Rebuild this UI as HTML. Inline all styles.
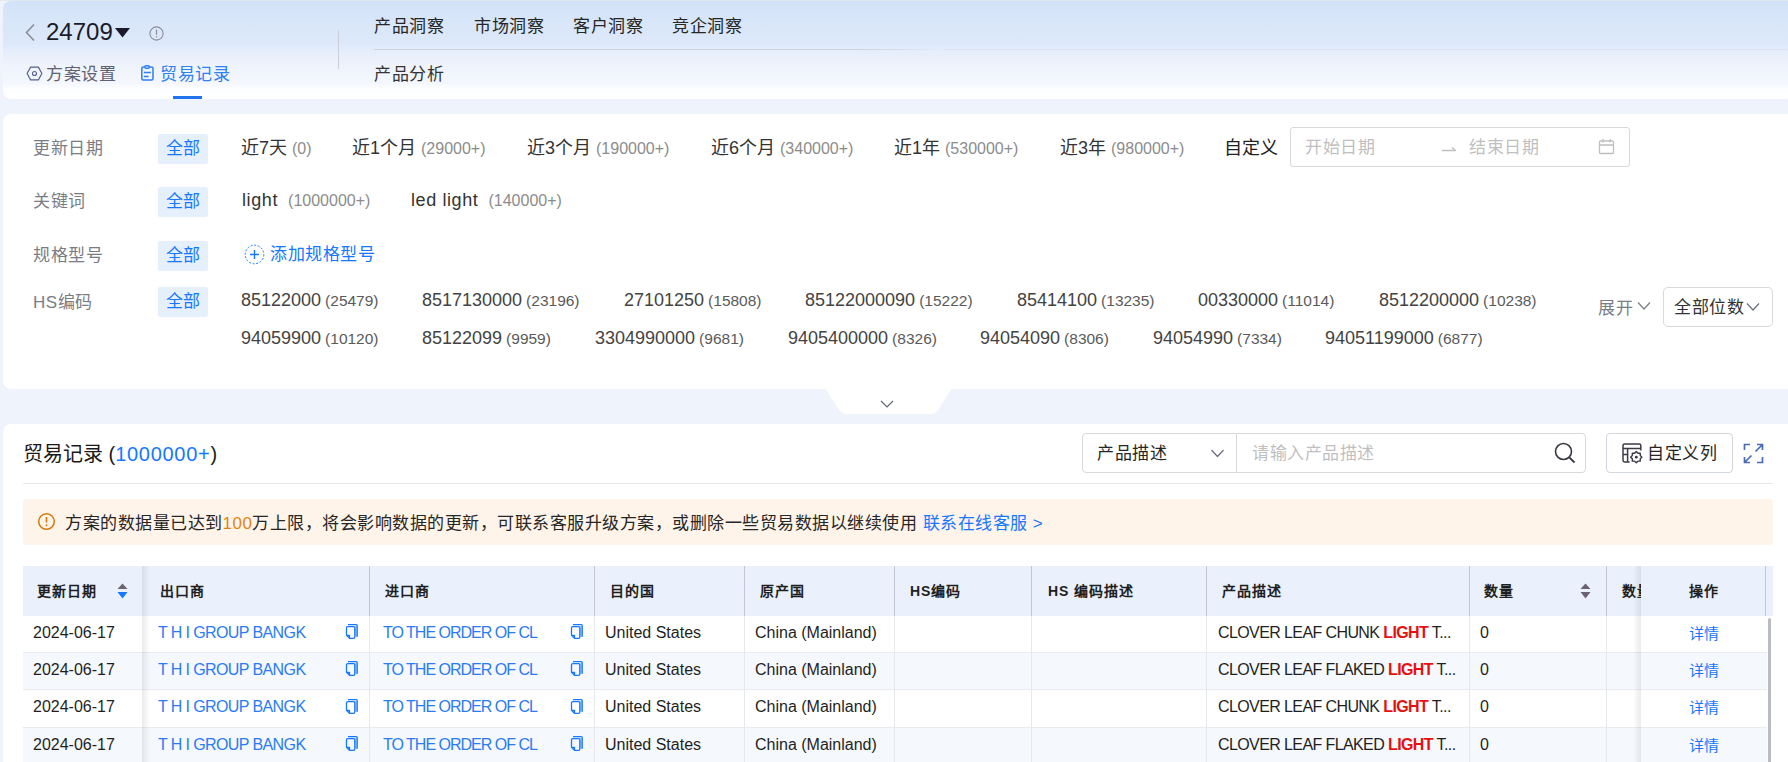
<!DOCTYPE html>
<html lang="zh-CN"><head><meta charset="utf-8">
<style>
*{box-sizing:border-box;margin:0;padding:0}
html,body{width:1788px;height:762px;overflow:hidden}
body{background:#eff3fc;font-family:"Liberation Sans",sans-serif;color:#333;position:relative}
.a{position:absolute;white-space:nowrap}
#hdr{position:absolute;left:3px;top:1px;width:1785px;height:98px;border-top-left-radius:8px;border-bottom-left-radius:8px;
 background:linear-gradient(180deg,#d2e2f8 0%,#d8e6f9 20%,#dde9fa 44%,#e6eefb 52%,#eef3fc 66%,#f4f7fd 84%,#fcfdff 89%,#ffffff 100%)}
.panel{position:absolute;left:3px;right:0;background:#fff;border-top-left-radius:8px;border-bottom-left-radius:8px}
.t18{font-size:17px;line-height:20px;letter-spacing:0.5px}
.lbl{color:#7a7d86}
.tag{position:absolute;left:158px;width:50px;height:30px;background:#e6f0fd;border-radius:2px;color:#1677ff;font-size:17px;letter-spacing:0.5px;text-indent:0.5px;line-height:28px;padding-top:1px;text-align:center}
.it{font-size:18px;line-height:20px;color:#333}
.cnt{font-size:16px;color:#8c8c8c}
.hs{font-size:18px;line-height:20px;color:#434343}
.hs span{font-size:15.5px;color:#5a5a5a;margin-left:4px}
.th{font-size:14px;line-height:20px;font-weight:bold;color:#1f1f1f;letter-spacing:1px}
.td{font-size:16px;line-height:20px;color:#1f1f1f}
.lk{color:#2a7bf5}
.pd b{color:#e8100f}
</style></head><body>
<!-- header -->
<div class="a" style="left:0;top:0;width:1788px;height:1px;background:#e4e7ee"></div><div id="hdr"></div>
<svg class="a" style="left:24px;top:23px" width="12" height="19" viewBox="0 0 12 19"><path d="M10 1.5 L2.5 9.5 L10 17.5" fill="none" stroke="#8b8e98" stroke-width="1.6"/></svg>
<div class="a" style="left:46px;top:18px;font-size:24px;line-height:28px;color:#1a1a2a">24709</div>
<svg class="a" style="left:115px;top:28px" width="16" height="10"><path d="M0 0 H15 L7.5 9.5Z" fill="#1a1a2a"/></svg>
<svg class="a" style="left:149px;top:26px" width="15" height="15" viewBox="0 0 15 15"><circle cx="7.5" cy="7.5" r="6.6" fill="none" stroke="#8b8e98" stroke-width="1.1"/><path d="M7.5 3.5V8.8" stroke="#8b8e98" stroke-width="1.2"/><circle cx="7.5" cy="10.8" r="0.75" fill="#8b8e98"/></svg>
<svg class="a" style="left:26px;top:66px" width="17" height="15" viewBox="0 0 17 15"><path d="M4.6 1.1 H12.4 L15.9 7.5 L12.4 13.9 H4.6 L1.1 7.5Z" fill="none" stroke="#56608a" stroke-width="1.15" stroke-linejoin="round"/><circle cx="8.5" cy="7.5" r="2" fill="none" stroke="#56608a" stroke-width="1.15"/></svg>
<div class="a t18" style="left:46px;top:65px;color:#5f6272">方案设置</div>
<svg class="a" style="left:140px;top:64px" width="15" height="18" viewBox="0 0 15 18"><path d="M4.6 2.9H3.3Q1.8 2.9 1.8 4.4V14.5Q1.8 16 3.3 16H11.5Q13 16 13 14.5V4.4Q13 2.9 11.5 2.9H9.4" fill="none" stroke="#2f80f0" stroke-width="1.5"/><rect x="4.7" y="1.6" width="4.7" height="2.8" rx="1.3" fill="#a9cbf9" stroke="#2f80f0" stroke-width="1.4"/><path d="M3.9 8.5H10.9M3.9 12.4H8.6" stroke="#2f80f0" stroke-width="1.5"/></svg>
<div class="a t18" style="left:160px;top:65px;color:#2f80f0">贸易记录</div>
<div class="a" style="left:173px;top:96px;width:29px;height:3px;background:#1f74ee"></div>
<div class="a" style="left:338px;top:30px;width:1px;height:39px;background:#c9ced8"></div>
<div class="a t18" style="left:374px;top:17px;color:#262626">产品洞察</div>
<div class="a t18" style="left:474px;top:17px;color:#262626">市场洞察</div>
<div class="a t18" style="left:573px;top:17px;color:#262626">客户洞察</div>
<div class="a t18" style="left:672px;top:17px;color:#262626">竞企洞察</div>
<div class="a" style="left:374px;top:49px;width:570px;height:1px;background:linear-gradient(90deg,#cdd3dd 0%,#cdd3dd 85%,rgba(205,211,221,0) 100%)"></div>
<div class="a" style="left:944px;top:49px;width:844px;height:1px;background:rgba(205,212,224,0.35)"></div>
<div class="a t18" style="left:374px;top:65px;color:#333">产品分析</div>

<!-- filter panel -->
<div class="panel" style="top:114px;height:275px"></div>
<svg class="a" style="left:825px;top:388px" width="127" height="27" viewBox="0 0 127 27"><path d="M0 0 H127 L113 22 Q110 26 105 26 H22 Q17 26 14 22 Z" fill="#fff"/><path d="M56 13 L62 19 L68 13" fill="none" stroke="#5e6170" stroke-width="1.1"/></svg>

<div class="a t18 lbl" style="left:33px;top:139px">更新日期</div>
<div class="tag" style="top:134px">全部</div>
<div class="a it" style="left:241px;top:138px">近7天 <span class="cnt">(0)</span></div>
<div class="a it" style="left:352px;top:138px">近1个月 <span class="cnt">(29000+)</span></div>
<div class="a it" style="left:527px;top:138px">近3个月 <span class="cnt">(190000+)</span></div>
<div class="a it" style="left:711px;top:138px">近6个月 <span class="cnt">(340000+)</span></div>
<div class="a it" style="left:894px;top:138px">近1年 <span class="cnt">(530000+)</span></div>
<div class="a it" style="left:1060px;top:138px">近3年 <span class="cnt">(980000+)</span></div>
<div class="a it" style="left:1224px;top:138px;color:#222">自定义</div>
<div class="a" style="left:1290px;top:127px;width:340px;height:40px;border:1px solid #d9d9d9;border-radius:3px;background:#fff"></div>
<div class="a t18" style="left:1305px;top:138px;color:#bfbfbf">开始日期</div>
<svg class="a" style="left:1441px;top:142.5px" width="16" height="10"><path d="M1 7.5H15M11 4.5 L14.5 7.5" fill="none" stroke="#bfbfbf" stroke-width="1.3"/></svg>
<div class="a t18" style="left:1469px;top:138px;color:#bfbfbf">结束日期</div>
<svg class="a" style="left:1598px;top:138px" width="17" height="17" viewBox="0 0 17 17"><rect x="1.5" y="3" width="14" height="12.5" rx="1" fill="none" stroke="#bfbfbf" stroke-width="1.3"/><path d="M1.5 7H15.5M5 1V4.5M12 1V4.5" stroke="#bfbfbf" stroke-width="1.3"/></svg>

<div class="a t18 lbl" style="left:33px;top:192px">关键词</div>
<div class="tag" style="top:187px">全部</div>
<div class="a it" style="left:242px;top:190px;letter-spacing:0.6px">light <span class="cnt" style="letter-spacing:0">&nbsp;(1000000+)</span></div>
<div class="a it" style="left:411px;top:190px;letter-spacing:0.6px">led light <span class="cnt" style="letter-spacing:0">&nbsp;(140000+)</span></div>

<div class="a t18 lbl" style="left:33px;top:246px">规格型号</div>
<div class="tag" style="top:241px">全部</div>
<svg class="a" style="left:244px;top:244px" width="21" height="21" viewBox="0 0 21 21"><circle cx="10.5" cy="10.5" r="9.3" fill="none" stroke="#1677ff" stroke-width="1" stroke-dasharray="2 1.6"/><path d="M10.5 6V15M6 10.5H15" stroke="#1677ff" stroke-width="1.4"/></svg>
<div class="a t18" style="left:270px;top:245px;color:#1677ff">添加规格型号</div>

<div class="a t18 lbl" style="left:33px;top:293px">HS编码</div>
<div class="tag" style="top:287px">全部</div>
<div class="a hs" style="left:241px;top:290px">85122000<span>(25479)</span></div>
<div class="a hs" style="left:422px;top:290px">8517130000<span>(23196)</span></div>
<div class="a hs" style="left:624px;top:290px">27101250<span>(15808)</span></div>
<div class="a hs" style="left:805px;top:290px">85122000090<span>(15222)</span></div>
<div class="a hs" style="left:1017px;top:290px">85414100<span>(13235)</span></div>
<div class="a hs" style="left:1198px;top:290px">00330000<span>(11014)</span></div>
<div class="a hs" style="left:1379px;top:290px">8512200000<span>(10238)</span></div>
<div class="a hs" style="left:241px;top:328px">94059900<span>(10120)</span></div>
<div class="a hs" style="left:422px;top:328px">85122099<span>(9959)</span></div>
<div class="a hs" style="left:595px;top:328px">3304990000<span>(9681)</span></div>
<div class="a hs" style="left:788px;top:328px">9405400000<span>(8326)</span></div>
<div class="a hs" style="left:980px;top:328px">94054090<span>(8306)</span></div>
<div class="a hs" style="left:1153px;top:328px">94054990<span>(7334)</span></div>
<div class="a hs" style="left:1325px;top:328px">94051199000<span>(6877)</span></div>
<div class="a t18 lbl" style="left:1598px;top:299px">展开</div>
<svg class="a" style="left:1637px;top:301px" width="14" height="10"><path d="M1 1.5 L7 8 L13 1.5" fill="none" stroke="#7a7d86" stroke-width="1.2"/></svg>
<div class="a" style="left:1663px;top:287px;width:110px;height:40px;border:1px solid #d9d9d9;border-radius:5px"></div>
<div class="a t18" style="left:1674px;top:298px;color:#333">全部位数</div>
<svg class="a" style="left:1746px;top:302px" width="14" height="10"><path d="M1 1.5 L7 8 L13 1.5" fill="none" stroke="#6b6e7c" stroke-width="1.2"/></svg>

<!-- records panel -->
<div class="panel" style="top:424px;height:400px"></div>
<div class="a" style="left:23px;top:442px;font-size:20px;line-height:24px;color:#1a1a1a;font-weight:500">贸易记录 (<span style="color:#1677ff;letter-spacing:0.7px;font-weight:normal">1000000+</span>)</div>
<div class="a" style="left:1082px;top:433px;width:504px;height:40px;border:1px solid #d9d9d9;border-radius:4px;background:#fff"></div>
<div class="a" style="left:1236px;top:434px;width:1px;height:38px;background:#d9d9d9"></div>
<div class="a t18" style="left:1097px;top:444px;color:#262626">产品描述</div>
<svg class="a" style="left:1210px;top:448px" width="15" height="11"><path d="M1.5 2 L7.5 8.5 L13.5 2" fill="none" stroke="#6b6e7c" stroke-width="1.2"/></svg>
<div class="a t18" style="left:1252px;top:444px;color:#bfbfbf">请输入产品描述</div>
<svg class="a" style="left:1554px;top:442px" width="22" height="22" viewBox="0 0 22 22"><circle cx="9.5" cy="9.5" r="8" fill="none" stroke="#3a3440" stroke-width="1.6"/><path d="M15.3 15.3 L20.5 20.5" stroke="#3a3440" stroke-width="1.8"/></svg>
<div class="a" style="left:1606px;top:433px;width:127px;height:40px;border:1px solid #d2d6de;border-radius:4px;background:#fff"></div>
<svg class="a" style="left:1622px;top:443px" width="21" height="21" viewBox="0 0 21 21"><path d="M7.6 18.9H2.6Q1 18.9 1 17.3V2.5Q1 0.9 2.6 0.9H17.2Q18.8 0.9 18.8 2.5V7.4" fill="none" stroke="#3d3a48" stroke-width="1.5"/><path d="M1 5.6H18.8M5.6 5.6V18.9M1 11.5H5.6" fill="none" stroke="#3d3a48" stroke-width="1.5"/><polygon points="14.30,8.60 15.95,10.23 18.26,10.24 18.27,12.55 19.90,14.20 18.27,15.85 18.26,18.16 15.95,18.17 14.30,19.80 12.65,18.17 10.34,18.16 10.33,15.85 8.70,14.20 10.33,12.55 10.34,10.24 12.65,10.23" fill="#fff" stroke="#3d3a48" stroke-width="1.4" stroke-linejoin="round"/><circle cx="14.3" cy="14.2" r="1.4" fill="#3d3a48"/></svg>
<div class="a t18" style="left:1647px;top:444px;color:#262626">自定义列</div>
<svg class="a" style="left:1743px;top:443px" width="21" height="21" viewBox="0 0 21 21"><path d="M1.5 7V1.5H7M14 1.5H19.5V7M19.5 14V19.5H14M7 19.5H1.5V14M19 2 L12.5 8.5M2 19 L8.5 12.5" fill="none" stroke="#4a6cb5" stroke-width="1.7"/></svg>
<div class="a" style="left:23px;top:483px;width:1750px;height:1px;background:#e8e8e8"></div>
<div class="a" style="left:23px;top:499px;width:1750px;height:46px;background:#fff4ea;border-radius:4px"></div>
<svg class="a" style="left:37px;top:512px" width="19" height="19" viewBox="0 0 19 19"><circle cx="9.5" cy="9.5" r="7.8" fill="none" stroke="#d4780a" stroke-width="1.5"/><path d="M9.5 5V10.5" stroke="#d4780a" stroke-width="1.6"/><circle cx="9.5" cy="13.2" r="0.95" fill="#d4780a"/></svg>
<div class="a" style="left:65px;top:514px;font-size:17px;letter-spacing:0.5px;line-height:20px;color:#262626">方案的数据量已达到<span style="color:#e0860f">100</span>万上限，将会影响数据的更新，可联系客服升级方案，或删除一些贸易数据以继续使用 <span style="color:#1677ff">联系在线客服 &gt;</span></div>

<div class="a" style="left:23px;top:566px;width:1750px;height:50px;background:#eaf1fc"></div>
<div class="a" style="left:23px;top:616px;width:1744px;height:36.5px;background:#ffffff;border-bottom:1px solid #e9ebef"></div>
<div class="a" style="left:23px;top:652.5px;width:1744px;height:37.5px;background:#f5f8fd;border-bottom:1px solid #e9ebef"></div>
<div class="a" style="left:23px;top:690px;width:1744px;height:37.5px;background:#ffffff;border-bottom:1px solid #e9ebef"></div>
<div class="a" style="left:23px;top:727.5px;width:1744px;height:37.5px;background:#f5f8fd;border-bottom:1px solid #e9ebef"></div>
<div class="a" style="left:369.0px;top:566px;width:1px;height:50px;background:#c3c7cf"></div>
<div class="a" style="left:594.2px;top:566px;width:1px;height:50px;background:#c3c7cf"></div>
<div class="a" style="left:744.1px;top:566px;width:1px;height:50px;background:#c3c7cf"></div>
<div class="a" style="left:893.9px;top:566px;width:1px;height:50px;background:#c3c7cf"></div>
<div class="a" style="left:1031.2px;top:566px;width:1px;height:50px;background:#c3c7cf"></div>
<div class="a" style="left:1205.8px;top:566px;width:1px;height:50px;background:#c3c7cf"></div>
<div class="a" style="left:1468.5px;top:566px;width:1px;height:50px;background:#c3c7cf"></div>
<div class="a" style="left:1606.0px;top:566px;width:1px;height:50px;background:#c3c7cf"></div>
<div class="a" style="left:1764.5px;top:566px;width:1px;height:50px;background:#c3c7cf"></div>
<div class="a" style="left:369.0px;top:616px;width:1px;height:150px;background:#e6e8ec"></div>
<div class="a" style="left:594.2px;top:616px;width:1px;height:150px;background:#e6e8ec"></div>
<div class="a" style="left:744.1px;top:616px;width:1px;height:150px;background:#e6e8ec"></div>
<div class="a" style="left:893.9px;top:616px;width:1px;height:150px;background:#e6e8ec"></div>
<div class="a" style="left:1031.2px;top:616px;width:1px;height:150px;background:#e6e8ec"></div>
<div class="a" style="left:1205.8px;top:616px;width:1px;height:150px;background:#e6e8ec"></div>
<div class="a" style="left:1468.5px;top:616px;width:1px;height:150px;background:#e6e8ec"></div>
<div class="a" style="left:1606.0px;top:616px;width:1px;height:150px;background:#e6e8ec"></div>
<div class="a" style="left:142px;top:566px;width:8px;height:200px;background:linear-gradient(90deg,rgba(0,0,0,0.08),rgba(0,0,0,0))"></div>
<div class="a" style="left:1633px;top:566px;width:8px;height:200px;background:linear-gradient(270deg,rgba(0,0,0,0.08),rgba(0,0,0,0))"></div>
<div class="a" style="left:1641px;top:566px;width:124px;height:50px;background:#eaf1fc"></div>
<div class="a" style="left:1641px;top:616px;width:126px;height:36.5px;background:#ffffff;border-bottom:1px solid #e9ebef"></div>
<div class="a" style="left:1641px;top:652.5px;width:126px;height:37.5px;background:#f5f8fd;border-bottom:1px solid #e9ebef"></div>
<div class="a" style="left:1641px;top:690px;width:126px;height:37.5px;background:#ffffff;border-bottom:1px solid #e9ebef"></div>
<div class="a" style="left:1641px;top:727.5px;width:126px;height:37.5px;background:#f5f8fd;border-bottom:1px solid #e9ebef"></div>
<div class="a" style="left:1764.5px;top:566px;width:1px;height:50px;background:#c3c7cf"></div>
<div class="a" style="left:1768px;top:618px;width:3px;height:150px;background:#b9bcc3;border-radius:2px"></div>
<div class="a th" style="left:37px;top:581px">更新日期</div>
<div class="a th" style="left:160px;top:581px">出口商</div>
<div class="a th" style="left:385px;top:581px">进口商</div>
<div class="a th" style="left:610px;top:581px">目的国</div>
<div class="a th" style="left:760px;top:581px">原产国</div>
<div class="a th" style="left:910px;top:581px">HS编码</div>
<div class="a th" style="left:1048px;top:581px">HS 编码描述</div>
<div class="a th" style="left:1222px;top:581px">产品描述</div>
<div class="a th" style="left:1484px;top:581px">数量</div>
<div class="a th" style="left:1622px;top:581px;width:19px;overflow:hidden">数量</div>
<div class="a th" style="left:1689px;top:581px">操作</div>
<svg class="a" style="left:117px;top:583px" width="11" height="16" viewBox="0 0 11 16"><path d="M5.5 0.5L10.5 6H0.5Z" fill="#6b6470"/><path d="M5.5 15.5L10.5 9H0.5Z" fill="#1677ff"/></svg>
<svg class="a" style="left:1580px;top:583px" width="11" height="16" viewBox="0 0 11 16"><path d="M5.5 0.5L10.5 6H0.5Z" fill="#6b6470"/><path d="M5.5 15.5L10.5 9H0.5Z" fill="#6b6470"/></svg>
<div class="a td" style="left:33px;top:622.5px">2024-06-17</div>
<div class="a td lk" style="letter-spacing:-0.6px;left:158px;top:622.5px">T H I GROUP BANGK</div>
<div class="a td lk" style="letter-spacing:-1px;left:383px;top:622.5px">TO THE ORDER OF CL</div>
<div class="a td" style="left:605px;top:622.5px">United States</div>
<div class="a td" style="left:755px;top:622.5px">China (Mainland)</div>
<div class="a td pd" style="letter-spacing:-0.6px;left:1218px;top:622.5px">CLOVER LEAF CHUNK <b>LIGHT</b> T...</div>
<div class="a td" style="left:1480px;top:622.5px">0</div>
<div class="a td" style="left:1689px;top:623.5px;color:#1677ff;font-size:15px">详情</div>
<svg class="a" style="left:344px;top:622px" width="16" height="19" viewBox="0 0 16 19"><rect x="10.8" y="4.2" width="2.4" height="10.5" fill="#a6cbfb"/><path d="M4 2.6H12.2Q13.2 2.6 13.2 3.6V14.7" fill="none" stroke="#1677ff" stroke-width="1.3"/><path d="M2.5 13.3V5.8Q2.5 4.6 3.7 4.6H9.6Q10.8 4.6 10.8 5.8V15.1Q10.8 16.3 9.6 16.3H5.5V13.3H2.5L5.5 16.3" fill="none" stroke="#1677ff" stroke-width="1.3" stroke-linejoin="round"/></svg>
<svg class="a" style="left:569px;top:622px" width="16" height="19" viewBox="0 0 16 19"><rect x="10.8" y="4.2" width="2.4" height="10.5" fill="#a6cbfb"/><path d="M4 2.6H12.2Q13.2 2.6 13.2 3.6V14.7" fill="none" stroke="#1677ff" stroke-width="1.3"/><path d="M2.5 13.3V5.8Q2.5 4.6 3.7 4.6H9.6Q10.8 4.6 10.8 5.8V15.1Q10.8 16.3 9.6 16.3H5.5V13.3H2.5L5.5 16.3" fill="none" stroke="#1677ff" stroke-width="1.3" stroke-linejoin="round"/></svg>
<div class="a td" style="left:33px;top:659.5px">2024-06-17</div>
<div class="a td lk" style="letter-spacing:-0.6px;left:158px;top:659.5px">T H I GROUP BANGK</div>
<div class="a td lk" style="letter-spacing:-1px;left:383px;top:659.5px">TO THE ORDER OF CL</div>
<div class="a td" style="left:605px;top:659.5px">United States</div>
<div class="a td" style="left:755px;top:659.5px">China (Mainland)</div>
<div class="a td pd" style="letter-spacing:-0.6px;left:1218px;top:659.5px">CLOVER LEAF FLAKED <b>LIGHT</b> T...</div>
<div class="a td" style="left:1480px;top:659.5px">0</div>
<div class="a td" style="left:1689px;top:660.5px;color:#1677ff;font-size:15px">详情</div>
<svg class="a" style="left:344px;top:659px" width="16" height="19" viewBox="0 0 16 19"><rect x="10.8" y="4.2" width="2.4" height="10.5" fill="#a6cbfb"/><path d="M4 2.6H12.2Q13.2 2.6 13.2 3.6V14.7" fill="none" stroke="#1677ff" stroke-width="1.3"/><path d="M2.5 13.3V5.8Q2.5 4.6 3.7 4.6H9.6Q10.8 4.6 10.8 5.8V15.1Q10.8 16.3 9.6 16.3H5.5V13.3H2.5L5.5 16.3" fill="none" stroke="#1677ff" stroke-width="1.3" stroke-linejoin="round"/></svg>
<svg class="a" style="left:569px;top:659px" width="16" height="19" viewBox="0 0 16 19"><rect x="10.8" y="4.2" width="2.4" height="10.5" fill="#a6cbfb"/><path d="M4 2.6H12.2Q13.2 2.6 13.2 3.6V14.7" fill="none" stroke="#1677ff" stroke-width="1.3"/><path d="M2.5 13.3V5.8Q2.5 4.6 3.7 4.6H9.6Q10.8 4.6 10.8 5.8V15.1Q10.8 16.3 9.6 16.3H5.5V13.3H2.5L5.5 16.3" fill="none" stroke="#1677ff" stroke-width="1.3" stroke-linejoin="round"/></svg>
<div class="a td" style="left:33px;top:697px">2024-06-17</div>
<div class="a td lk" style="letter-spacing:-0.6px;left:158px;top:697px">T H I GROUP BANGK</div>
<div class="a td lk" style="letter-spacing:-1px;left:383px;top:697px">TO THE ORDER OF CL</div>
<div class="a td" style="left:605px;top:697px">United States</div>
<div class="a td" style="left:755px;top:697px">China (Mainland)</div>
<div class="a td pd" style="letter-spacing:-0.6px;left:1218px;top:697px">CLOVER LEAF CHUNK <b>LIGHT</b> T...</div>
<div class="a td" style="left:1480px;top:697px">0</div>
<div class="a td" style="left:1689px;top:698px;color:#1677ff;font-size:15px">详情</div>
<svg class="a" style="left:344px;top:696.5px" width="16" height="19" viewBox="0 0 16 19"><rect x="10.8" y="4.2" width="2.4" height="10.5" fill="#a6cbfb"/><path d="M4 2.6H12.2Q13.2 2.6 13.2 3.6V14.7" fill="none" stroke="#1677ff" stroke-width="1.3"/><path d="M2.5 13.3V5.8Q2.5 4.6 3.7 4.6H9.6Q10.8 4.6 10.8 5.8V15.1Q10.8 16.3 9.6 16.3H5.5V13.3H2.5L5.5 16.3" fill="none" stroke="#1677ff" stroke-width="1.3" stroke-linejoin="round"/></svg>
<svg class="a" style="left:569px;top:696.5px" width="16" height="19" viewBox="0 0 16 19"><rect x="10.8" y="4.2" width="2.4" height="10.5" fill="#a6cbfb"/><path d="M4 2.6H12.2Q13.2 2.6 13.2 3.6V14.7" fill="none" stroke="#1677ff" stroke-width="1.3"/><path d="M2.5 13.3V5.8Q2.5 4.6 3.7 4.6H9.6Q10.8 4.6 10.8 5.8V15.1Q10.8 16.3 9.6 16.3H5.5V13.3H2.5L5.5 16.3" fill="none" stroke="#1677ff" stroke-width="1.3" stroke-linejoin="round"/></svg>
<div class="a td" style="left:33px;top:734.5px">2024-06-17</div>
<div class="a td lk" style="letter-spacing:-0.6px;left:158px;top:734.5px">T H I GROUP BANGK</div>
<div class="a td lk" style="letter-spacing:-1px;left:383px;top:734.5px">TO THE ORDER OF CL</div>
<div class="a td" style="left:605px;top:734.5px">United States</div>
<div class="a td" style="left:755px;top:734.5px">China (Mainland)</div>
<div class="a td pd" style="letter-spacing:-0.6px;left:1218px;top:734.5px">CLOVER LEAF FLAKED <b>LIGHT</b> T...</div>
<div class="a td" style="left:1480px;top:734.5px">0</div>
<div class="a td" style="left:1689px;top:735.5px;color:#1677ff;font-size:15px">详情</div>
<svg class="a" style="left:344px;top:734px" width="16" height="19" viewBox="0 0 16 19"><rect x="10.8" y="4.2" width="2.4" height="10.5" fill="#a6cbfb"/><path d="M4 2.6H12.2Q13.2 2.6 13.2 3.6V14.7" fill="none" stroke="#1677ff" stroke-width="1.3"/><path d="M2.5 13.3V5.8Q2.5 4.6 3.7 4.6H9.6Q10.8 4.6 10.8 5.8V15.1Q10.8 16.3 9.6 16.3H5.5V13.3H2.5L5.5 16.3" fill="none" stroke="#1677ff" stroke-width="1.3" stroke-linejoin="round"/></svg>
<svg class="a" style="left:569px;top:734px" width="16" height="19" viewBox="0 0 16 19"><rect x="10.8" y="4.2" width="2.4" height="10.5" fill="#a6cbfb"/><path d="M4 2.6H12.2Q13.2 2.6 13.2 3.6V14.7" fill="none" stroke="#1677ff" stroke-width="1.3"/><path d="M2.5 13.3V5.8Q2.5 4.6 3.7 4.6H9.6Q10.8 4.6 10.8 5.8V15.1Q10.8 16.3 9.6 16.3H5.5V13.3H2.5L5.5 16.3" fill="none" stroke="#1677ff" stroke-width="1.3" stroke-linejoin="round"/></svg>
</body></html>
